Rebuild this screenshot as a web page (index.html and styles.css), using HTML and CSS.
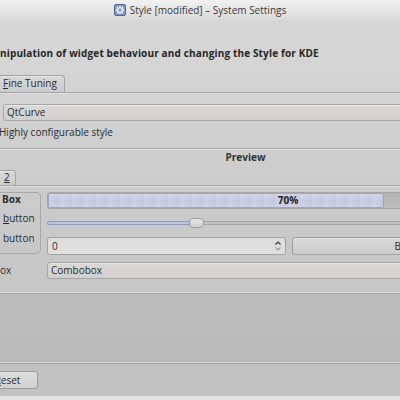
FILE: index.html
```html
<!DOCTYPE html>
<html>
<head>
<meta charset="utf-8">
<link rel="stylesheet" href="styles.css">
</head>
<body>
<div class="window">
  <div class="titlebar">
    <svg class="appicon" width="12" height="12" viewBox="0 0 12 12">
      <rect x="0.5" y="0.5" width="11" height="11" rx="1.5" fill="#7f9cc6" stroke="#4c6690"/>
      <g fill="none" stroke="#eef2f8" stroke-width="1.3">
        <circle cx="6" cy="6" r="2.4"/>
        <path d="M6 1.8V3.2M6 8.8V10.2M1.8 6H3.2M8.8 6H10.2M3 3L4 4M8 8L9 9M9 3L8 4M4 8L3 9"/>
      </g>
    </svg>
    <span class="title">Style [modified] – System Settings</span>
  </div>

  <div class="header">nipulation of widget behaviour and changing the Style for KDE</div>

  <div class="tabbar"><div class="tab tab-fine"><span class="ul">F</span>ine Tuning</div></div>
  <div class="tabline"></div>

  <div class="combo combo-style">QtCurve</div>
  <div class="desc">Highly configurable style</div>
  <div class="sep sep-preview"></div>
  <div class="preview-title">Preview</div>

  <div class="tabbar tabbar-small"><div class="tab tab-two"><span class="ul">2</span></div></div>
  <div class="tabline"></div>

  <div class="preview">
    <div class="leftcol">
      <div class="group">
        <div class="gtitle">Box</div>
        <div class="radio"><span class="ul">b</span>utton</div>
        <div class="radio">button</div>
      </div>
      <div class="lbl">ox</div>
    </div>
    <div class="rightcol">
      <div class="progress">
        <div class="track"><div class="fill" style="width:70%"></div></div>
        <div class="ptext">70%</div>
      </div>
      <div class="slider">
        <div class="groove groove-done"></div>
        <div class="handle"></div>
        <div class="groove groove-rest"></div>
      </div>
      <div class="row">
        <div class="spin">
          <span class="spinval">0</span>
          <svg class="arrows" width="8" height="12" viewBox="0 0 8 12">
            <path d="M1.5 4.5L4 2L6.5 4.5" fill="none" stroke="#3c3c3c" stroke-width="1.2"/>
            <path d="M1.5 7.5L4 10L6.5 7.5" fill="none" stroke="#9a9a9a" stroke-width="1.2"/>
          </svg>
        </div>
        <div class="btn btn-preview">Button</div>
      </div>
      <div class="combo combo-preview">Combobox</div>
    </div>
  </div>

  <div class="sep sep-low"></div>
  <div class="lower"></div>
  <div class="sep sep-low2"></div>
  <div class="footer">
    <div class="btn btn-reset"><span class="ul">R</span>eset</div>
  </div>
  <div class="bottomstrip"></div>
</div>
</body>
</html>
```

FILE: styles.css
```css
html, body {
  margin: 0;
  padding: 0;
  overflow: hidden;
}
body {
  width: 400px;
  height: 400px;
  font-family: "Open Sans", "DejaVu Sans", sans-serif;
  font-size: 10px;
  color: #2b2b2b;
}
.window {
  width: 400px;
  height: 400px;
  overflow: hidden;
  display: flex;
  flex-direction: column;
  background: linear-gradient(#d7d7d7 0px, #d4d4d4 80px, #cccccc 180px, #c6c6c6 290px);
}
.window > * { flex-shrink: 0; }

.titlebar {
  width: 400px;
  height: 20px;
  display: flex;
  align-items: center;
  justify-content: center;
  gap: 4px;
  background: linear-gradient(#f2f2f2, #d9d9d9);
}
.appicon { display: block; margin-top: -1px; }
.title {
  color: #383838;
  line-height: 18px;
  margin-top: -1px;
}

.header {
  margin-top: 26px;
  line-height: 14px;
  font-weight: bold;
  white-space: nowrap;
  letter-spacing: 0.15px;
  color: #262626;
}

.tabbar {
  margin-top: 15px;
  height: 17px;
  display: flex;
  align-items: flex-end;
}
.tab {
  border: 1px solid #a3a3a3;
  border-bottom: none;
  border-radius: 4px 4px 0 0;
  background: linear-gradient(#d9d9d9, #cbcbcb);
  line-height: 14px;
  box-shadow: inset 0 1px #e6e6e6;
}
.tab-fine {
  height: 16px;
  margin-left: -2px;
  padding: 0 7px 0 4px;
}
.tabbar-small {
  margin-top: 6px;
  height: 15px;
}
.tab-two {
  height: 14px;
  line-height: 13px;
  margin-left: -4px;
  padding: 0 5px 0 7px;
}
.ul {
  text-decoration: underline;
  text-underline-offset: 1px;
}
.tabline {
  width: 600px;
  height: 1px;
  background: #a4a4a4;
  border-bottom: 1px solid #e1e1e1;
}

.combo {
  box-sizing: border-box;
  height: 17px;
  border: 1px solid #a6a6a6;
  border-radius: 3px;
  background: linear-gradient(#dad8d6, #d2d0ce);
  box-shadow: inset 0 1px #e8e7e5;
  line-height: 14px;
  padding-left: 3px;
  white-space: nowrap;
}
.combo-style {
  margin-top: 10px;
  margin-left: 3px;
  width: 600px;
}
.desc {
  margin-top: 4px;
  line-height: 14px;
  margin-left: -1px;
}
.sep {
  width: 600px;
  height: 1px;
  background: #a9a9a9;
  border-bottom: 1px solid #dedede;
}
.sep-preview { margin-top: 9px; }
.preview-title {
  width: 491px;
  text-align: center;
  font-weight: bold;
  line-height: 14px;
  color: #333;
}

.preview {
  margin-top: 5px;
  display: flex;
  gap: 6px;
  width: 600px;
}
.leftcol {
  flex-shrink: 0;
  width: 41px;
  display: flex;
  flex-direction: column;
}
.group {
  box-sizing: border-box;
  height: 62px;
  border: 1px solid #a8a8a8;
  border-left: none;
  border-radius: 0 5px 5px 0;
  padding-left: 2px;
}
.gtitle {
  font-weight: bold;
  line-height: 13px;
}
.radio {
  line-height: 20px;
  padding-left: 1px;
}
.gtitle + .radio { margin-top: 2px; }
.lbl {
  margin-top: 9px;
  line-height: 14px;
}

.rightcol {
  flex-shrink: 0;
  width: 482px;
  display: flex;
  flex-direction: column;
}
.progress {
  display: grid;
  height: 17px;
}
.track, .ptext { grid-area: 1 / 1; }
.track {
  box-sizing: border-box;
  height: 17px;
  border: 1px solid #a5a5a5;
  border-radius: 3px;
  background: linear-gradient(#b3b3b3, #bdbdbd);
  overflow: hidden;
}
.fill {
  box-sizing: border-box;
  height: 15px;
  border: 1px solid #a0a4c8;
  border-radius: 2px;
  background:
    repeating-linear-gradient(90deg, rgba(255,255,255,0.10) 0px, rgba(255,255,255,0.02) 6px, rgba(140,145,190,0.08) 9px, rgba(255,255,255,0.10) 12px),
    linear-gradient(#d0d3e6, #c5c9df 50%, #cdd0e4);
}
.ptext {
  text-align: center;
  font-weight: bold;
  line-height: 17px;
  color: #222;
}

.slider {
  margin-top: 9px;
  height: 10px;
  display: flex;
  align-items: center;
}
.groove {
  box-sizing: border-box;
  height: 4px;
  border-radius: 2px;
}
.groove-done {
  flex-shrink: 0;
  width: 142px;
  background: #c0c4dc;
  border: 1px solid #9398ba;
  border-right: none;
  border-radius: 2px 0 0 2px;
}
.groove-rest {
  flex: 1;
  background: #c2c2c2;
  border: 1px solid #a2a2a2;
  border-left: none;
  border-radius: 0 2px 2px 0;
}
.handle {
  flex-shrink: 0;
  box-sizing: border-box;
  width: 15px;
  height: 10px;
  border: 1px solid #9c9c9c;
  border-radius: 4px;
  background: linear-gradient(#e4e4e4, #d2d2d2);
}

.row {
  margin-top: 9px;
  display: flex;
  gap: 6px;
  height: 18px;
}
.spin {
  flex-shrink: 0;
  box-sizing: border-box;
  width: 239px;
  height: 18px;
  border: 1px solid #a3a3a3;
  border-radius: 3px;
  background: linear-gradient(#dddcda, #e2e1df);
  display: flex;
  align-items: center;
  justify-content: space-between;
  padding: 0 3px 0 4px;
}
.spinval { line-height: 14px; }
.arrows { display: block; }
.btn {
  box-sizing: border-box;
  border: 1px solid #a0a0a0;
  border-radius: 3px;
  background: linear-gradient(#d8d8d8, #cccccc);
  box-shadow: inset 0 1px #e4e4e4;
  text-align: center;
  line-height: 16px;
  white-space: nowrap;
}
.btn-preview {
  flex-shrink: 0;
  width: 237px;
  height: 18px;
}
.combo-preview {
  margin-top: 7px;
  width: 482px;
}

.sep-low {
  margin-top: 13px;
  background: #dcdcdc;
  border-bottom: 1px solid #a6a6a6;
}
.lower {
  height: 68px;
  width: 600px;
  background: linear-gradient(#bcbcbc, #b9b9b9);
}
.sep-low2 {
  background: #d8d8d8;
  border-bottom: 1px solid #a3a3a3;
}
.footer {
  height: 32px;
  background: #c1c1c1;
  padding-top: 7px;
  box-sizing: border-box;
}
.btn-reset {
  width: 61px;
  height: 18px;
  margin-left: -23px;
  border-color: #9a9a9a;
  background: linear-gradient(#dddddd, #d1d1d1);
}
.bottomstrip {
  height: 4px;
  background: #e2e2e2;
}
```
